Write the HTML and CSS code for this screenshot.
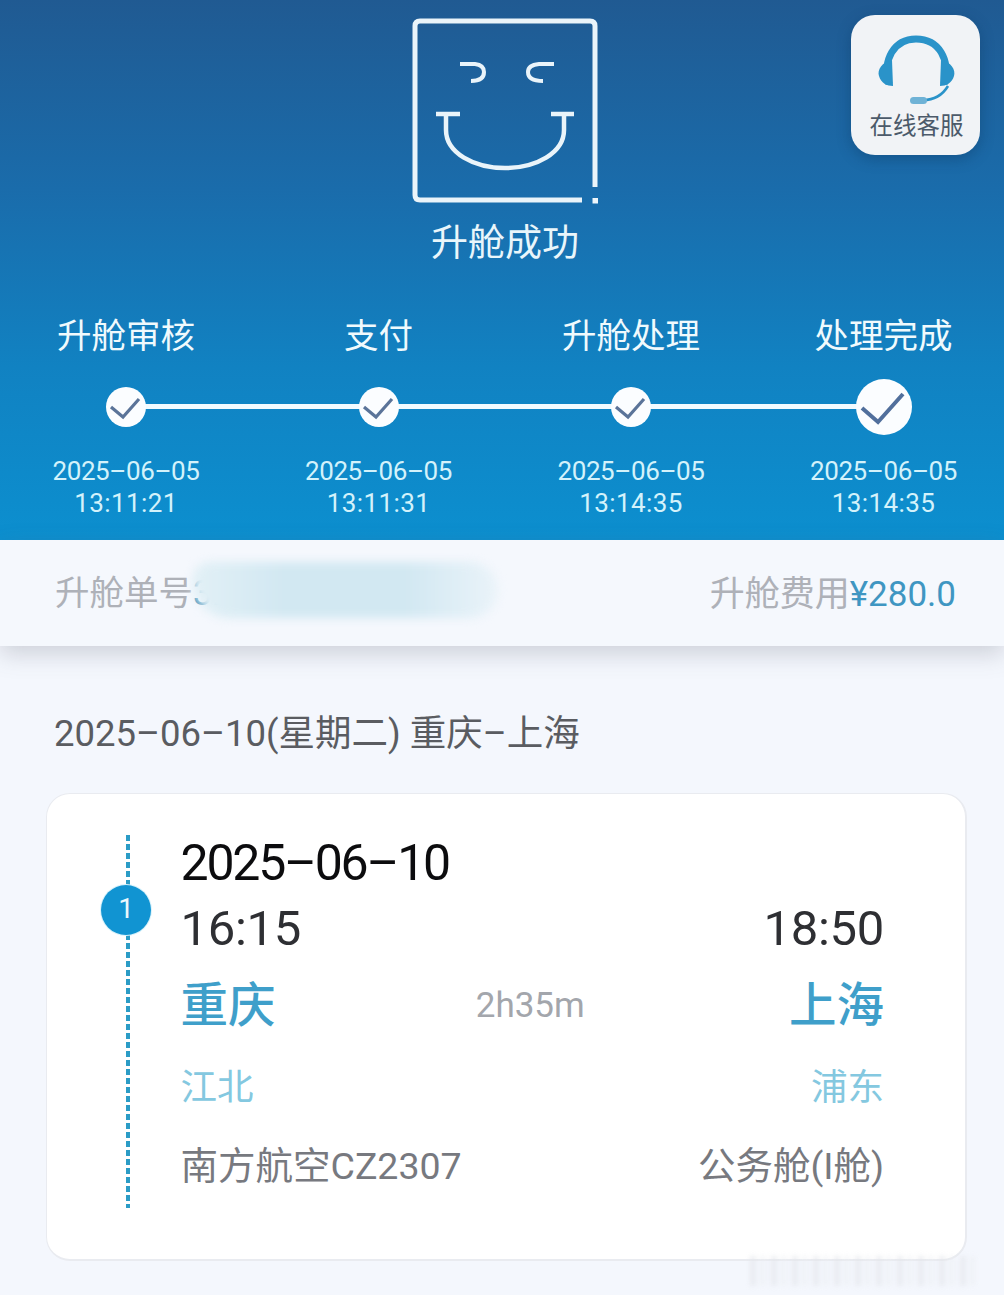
FILE: index.html
```html
<!DOCTYPE html>
<html lang="zh-CN">
<head>
<meta charset="utf-8">
<title>升舱成功</title>
<link rel="stylesheet" href="styles.css">
</head>
<body>
<div class="page">
  <header class="hero">
    <svg class="smile" width="190" height="190" viewBox="410 16 190 190" fill="none" stroke="#eaf4fa" stroke-width="4.500">
      <path d="M582 200H420Q415 200 415 195V26Q415 21 420 21H590Q595 21 595 26V187" stroke-width="5"/>
      <path d="M592.500 198h5.500v5.500h-5.500z" fill="#eef6fb" stroke="none"/>
      <path d="M460 64H475Q484 65 484 72Q484 81 471 81" stroke-width="4"/>
      <path d="M554 64H539Q528 65 528 72Q528 81 543 81" stroke-width="4"/>
      <path d="M436 114H460M551 114H574"/>
      <path d="M446 114V130C446 153 474 168 505 168C536 168 564 153 564 130V114"/>
    </svg>
    <h1 class="hero-title">升舱成功</h1>
    <ol class="steps">
      <li class="step">
        <span class="step-name">升舱审核</span>
        <span class="dot"><svg width="40" height="40" viewBox="0 0 40 40" fill="none" stroke="#5b7499" stroke-width="3.200"><path d="M5 20L17 30L33 12"/></svg></span>
        <span class="step-time"><span class="time-date">2025–06–05</span><span class="time-clock">13:11:21</span></span>
      </li>
      <li class="step">
        <span class="step-name">支付</span>
        <span class="dot"><svg width="40" height="40" viewBox="0 0 40 40" fill="none" stroke="#5b7499" stroke-width="3.200"><path d="M5 20L17 30L33 12"/></svg></span>
        <span class="step-time"><span class="time-date">2025–06–05</span><span class="time-clock">13:11:31</span></span>
      </li>
      <li class="step">
        <span class="step-name">升舱处理</span>
        <span class="dot"><svg width="40" height="40" viewBox="0 0 40 40" fill="none" stroke="#5b7499" stroke-width="3.200"><path d="M5 20L17 30L33 12"/></svg></span>
        <span class="step-time"><span class="time-date">2025–06–05</span><span class="time-clock">13:14:35</span></span>
      </li>
      <li class="step step-last">
        <span class="step-name">处理完成</span>
        <span class="dot dot-big"><svg width="56" height="56" viewBox="0 0 56 56" fill="none" stroke="#516f9c" stroke-width="4"><path d="M6 29L22 43L47 15"/></svg></span>
        <span class="step-time"><span class="time-date">2025–06–05</span><span class="time-clock">13:14:35</span></span>
      </li>
    </ol>
    <aside class="service">
      <svg class="headset" width="80" height="72" viewBox="875 34 80 72" fill="none">
        <path d="M888 84C881 60 893 39 915 39C938 39 950 60 943 84" stroke="#2a93c9" stroke-width="7"/>
        <path d="M891 60C881 62 876 70 878 76C880 83 886 86 892 86Z" fill="#2a93c9"/>
        <path d="M940 60C950 62 955 70 953 76C951 83 945 86 939 86Z" fill="#2a93c9"/>
        <path d="M922 100C932 100 941 96 947 86" stroke="#2a93c9" stroke-width="2.500"/>
        <rect x="909" y="97" width="17" height="7" rx="3.500" fill="#6fb2d6"/>
      </svg>
      <span class="service-label">在线客服</span>
    </aside>
  </header>

  <section class="order">
    <div class="order-no"><span class="order-label">升舱单号</span><span class="order-val">32</span></div>
    <div class="order-fee"><span class="order-label">升舱费用</span><span class="fee">¥280.0</span></div>
    <div class="smear"></div>
  </section>

  <main class="content">
    <h2 class="trip">2025–06–10(星期二) 重庆–上海</h2>
    <article class="card">
      <div class="rail">
        <span class="badge">1</span>
      </div>
      <div class="flight">
        <div class="date">2025–06–10</div>
        <div class="row times"><span>16:15</span><span>18:50</span></div>
        <div class="row cities"><span>重庆</span><span class="duration">2h35m</span><span>上海</span></div>
        <div class="row airports"><span>江北</span><span>浦东</span></div>
        <div class="row meta"><span>南方航空CZ2307</span><span>公务舱(I舱)</span></div>
      </div>
    </article>
  </main>
  <div class="watermark"></div>
</div>
</body>
</html>
```
FILE: styles.css
```css
* { box-sizing: border-box; }
html, body { margin: 0; padding: 0; }
body {
  background: #f4f7fd;
  font-family: Roboto, "Noto Sans CJK SC", sans-serif;
}
.page {
  position: relative;
  width: 1004px;
  height: 1295px;
  overflow: hidden;
  background: #f4f7fd;
}
.hero {
  position: relative;
  height: 540px;
  padding-top: 16px;
  display: flex;
  flex-direction: column;
  align-items: center;
  background: linear-gradient(180deg, #205a92 0%, #1a6cab 35%, #1182c2 68%, #0c8fcf 100%);
  color: #eef9fd;
}
.smile { display: block; margin-left: 6px; }
.hero-title {
  margin: 14px 0 0 6px;
  font-size: 37px;
  line-height: 48px;
  font-weight: 400;
  color: #e9f6fb;
}
.steps {
  list-style: none;
  margin: 0;
  padding: 0 0 0 6px;
  margin-top: 46px;
  width: 100%;
  display: grid;
  grid-template-columns: repeat(4, 240px);
  column-gap: 12.5px;
}
.step {
  position: relative;
  display: flex;
  flex-direction: column;
  align-items: center;
}
.step::after {
  content: "";
  position: absolute;
  left: 50%;
  top: 90px;
  width: 253px;
  height: 5px;
  background: #f2fbff;
}
.step-last::after { display: none; }
.step-name {
  font-size: 34.500px;
  line-height: 44px;
  color: #f0fafd;
}
.dot {
  position: relative;
  z-index: 1;
  margin-top: 29px;
  width: 40px;
  height: 40px;
  border-radius: 50%;
  background: #fbfdff;
  display: flex;
  align-items: center;
  justify-content: center;
}
.dot-big {
  width: 56px;
  height: 56px;
  margin: 21px 0 -8px;
}
.step-time {
  margin-top: 28px;
  display: flex;
  flex-direction: column;
  align-items: center;
  font-size: 26px;
  line-height: 32px;
  color: #d3f2fb;
}
.time-date { letter-spacing: -0.4px; }
.time-clock { letter-spacing: 0.4px; }
.service {
  position: absolute;
  left: 851px;
  top: 15px;
  width: 129px;
  height: 140px;
  border-radius: 24px;
  background: #f1f3f6;
  box-shadow: 0 4px 14px rgba(10, 50, 90, 0.35);
  display: flex;
  flex-direction: column;
  align-items: center;
  padding-top: 19px;
}
.headset { display: block; }
.service-label {
  margin: 5px 0 0 2px;
  font-size: 23.500px;
  line-height: 30px;
  color: #4c5a6a;
}
.order {
  position: relative;
  height: 106px;
  padding: 0 48px 6px 55px;
  display: flex;
  justify-content: space-between;
  align-items: center;
  background: #f5f8fd;
  box-shadow: 0 8px 22px rgba(90, 95, 110, 0.25);
  font-size: 34.500px;
}
.order-label { color: #aeb1b8; }
.order-fee .order-label { font-size: 35px; }
.order-val { color: #3f8fb8; }
.fee { color: #3f96c2; font-size: 35px; }
.smear {
  position: absolute;
  left: 192px;
  top: 22px;
  width: 306px;
  height: 56px;
  border-radius: 20px 30px 30px 40px;
  background: linear-gradient(90deg, #e2f0f6 0%, #d2e8f2 30%, #d2e8f2 70%, #eaf3f9 100%);
  filter: blur(5px);
}
.content { padding: 68px 37px 0 46px; }
.trip {
  margin: 0;
  padding-left: 8px;
  font-size: 36.500px;
  line-height: 40px;
  font-weight: 400;
  color: #5a5c61;
}
.card {
  margin-top: 39px;
  height: 468px;
  padding: 41px 81px 0 0;
  display: flex;
  background: #fff;
  border-radius: 24px;
  border: 1px solid #e9ebf0;
  border-width: 1px 2px 2px 1px;
}
.rail {
  position: relative;
  flex: none;
  width: 133.500px;
  height: 373px;
}
.rail::before {
  content: "";
  position: absolute;
  left: 79px;
  top: 0;
  bottom: 0;
  width: 4px;
  background: repeating-linear-gradient(180deg, #2b9cc6 0 6px, transparent 6px 9px);
}
.badge {
  position: absolute;
  left: 54px;
  top: 50px;
  width: 50px;
  height: 50px;
  border-radius: 50%;
  background: #1194d2;
  box-shadow: 0 0 0 1px #d8f2fb;
  color: #eaf8fd;
  font-size: 28px;
  line-height: 48px;
  text-align: center;
}
.flight { flex: 1; padding-top: 1px; }
.row {
  display: flex;
  justify-content: space-between;
  align-items: center;
}
.date {
  font-size: 50px;
  line-height: 54px;
  letter-spacing: -2.200px;
  color: #0c0c0e;
}
.times {
  margin-top: 12px;
  font-size: 49px;
  line-height: 54px;
  letter-spacing: -0.300px;
  color: #2e2f33;
}
.cities {
  margin-top: 22px;
  font-size: 47.500px;
  line-height: 56px;
  font-weight: 500;
  color: #3f9fca;
}
.duration {
  font-size: 35px;
  font-weight: 400;
  color: #a3a6ac;
  margin-right: 4px;
}
.airports {
  margin-top: 30px;
  font-size: 36.500px;
  line-height: 48px;
  color: #84c8e0;
}
.meta {
  margin-top: 30px;
  font-size: 37.500px;
  line-height: 48px;
  color: #77797f;
}
.watermark {
  position: absolute;
  left: 750px;
  top: 1256px;
  width: 230px;
  height: 30px;
  background: repeating-linear-gradient(90deg, #e4e6eb 0 6px, transparent 6px 11px, #eceef2 11px 15px, transparent 15px 21px);
  opacity: 0.7;
  filter: blur(2.500px);
}
```
